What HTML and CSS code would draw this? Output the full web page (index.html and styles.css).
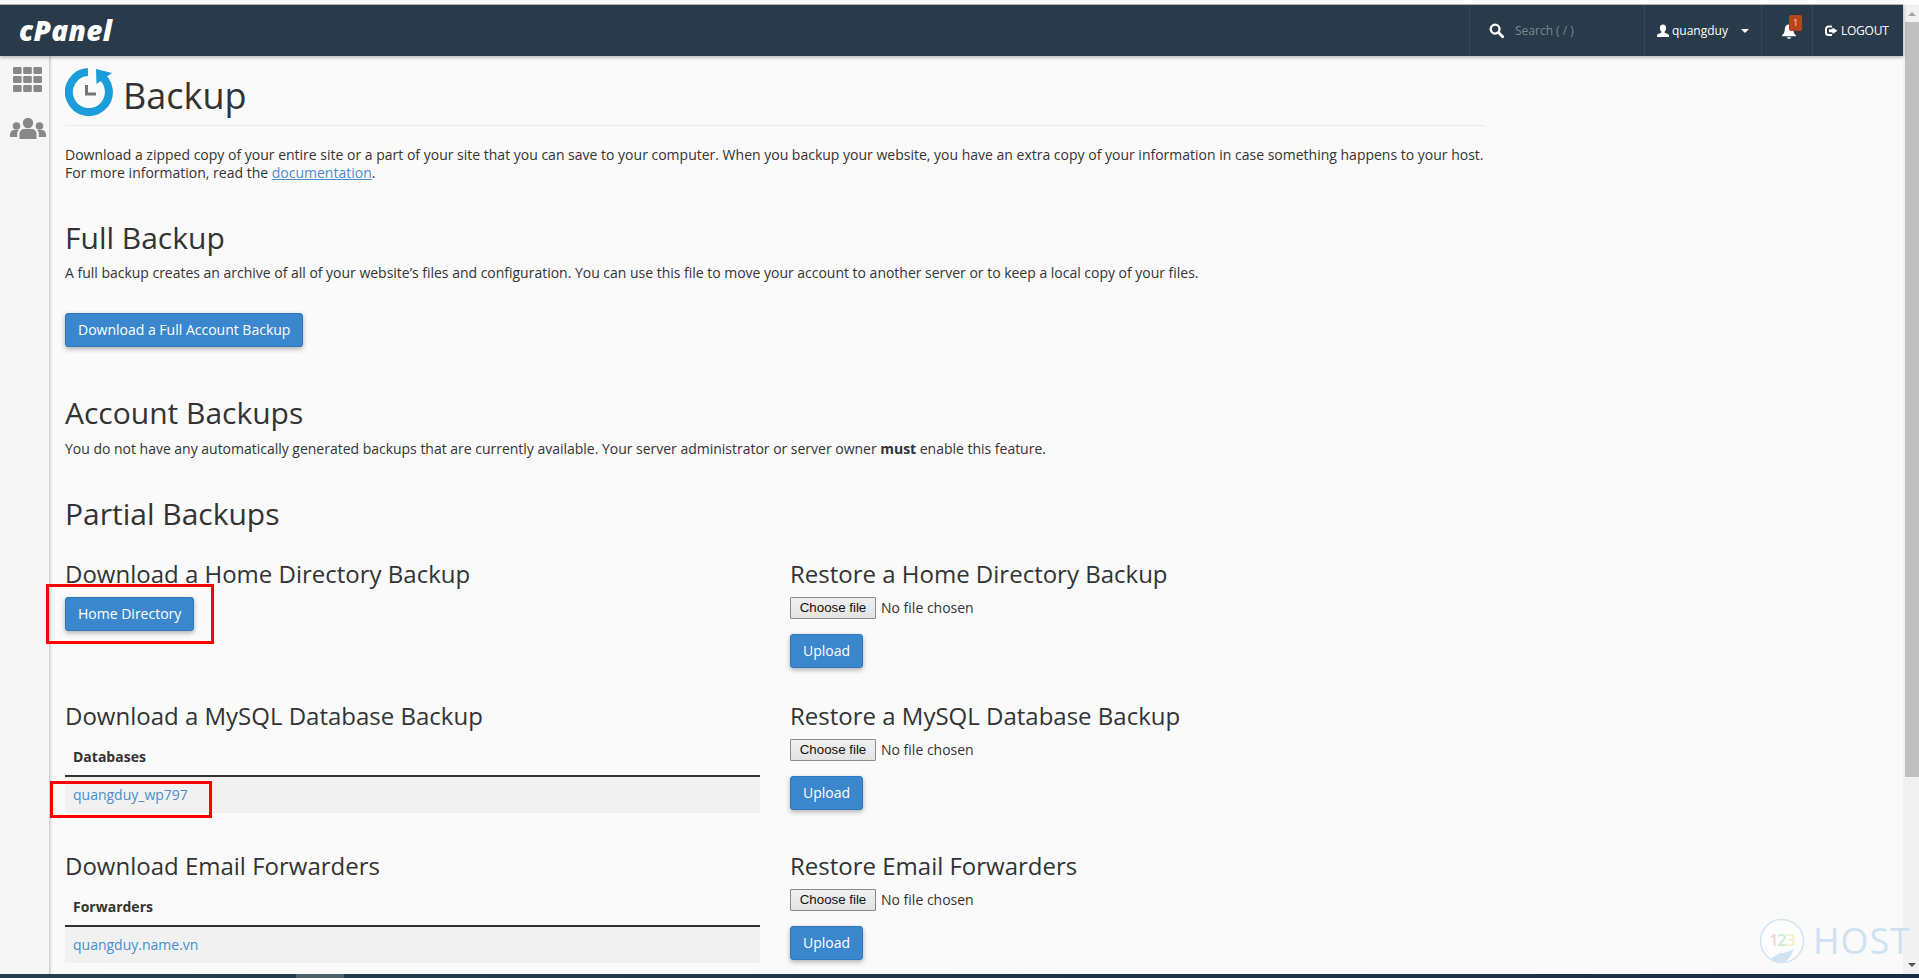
FILE: index.html
```html
<!DOCTYPE html>
<html lang="en">
<head>
<meta charset="utf-8">
<title>Backup - cPanel</title>
<link rel="stylesheet" href="styles.css">
</head>
<body>
<div class="window">
  <header class="topbar">
    <a class="logo">cPanel</a>
    <div class="tools">
      <div class="tool search">
        <svg class="i-search" viewBox="0 0 16 16"><circle cx="6.5" cy="6.5" r="4.7" fill="none" stroke="#fff" stroke-width="2.4"/><path d="M10 10l4.6 4.6" stroke="#fff" stroke-width="3" stroke-linecap="round"/></svg>
        <span class="search-text">Search ( / )</span>
      </div>
      <div class="tool user">
        <svg class="i-user" viewBox="0 0 14 14"><path fill="#fff" d="M7 0.5c2 0 3.2 1.500 3.200 3.600 0 1.500-.7 2.900-1.500 3.500v1.100c1.500.6 4.300 1.300 4.300 2.900v1.400H1v-1.400c0-1.600 2.800-2.300 4.300-2.900V7.600C4.500 7 3.800 5.600 3.800 4.100 3.800 2 5 .5 7 .5z"/></svg>
        <span class="user-name">quangduy</span>
        <span class="caret"></span>
      </div>
      <div class="tool bell">
        <svg class="i-bell" viewBox="0 0 16 16"><path fill="#fff" d="M8 1.500c2.600 0 4.200 2 4.200 4.500 0 3 1 5 2.800 6.500v.8H1v-.8C2.800 11 3.800 9 3.800 6 3.800 3.500 5.400 1.500 8 1.500z"/><path fill="#fff" d="M6 14.300h4c0 1-.9 1.500-2 1.500s-2-.5-2-1.500z"/></svg>
        <span class="badge">1</span>
      </div>
      <div class="tool logout">
        <svg class="i-logout" viewBox="0 0 14 14"><path fill="none" stroke="#fff" stroke-width="2" d="M8 2.500H4.500A2.500 2.500 0 0 0 2 5v3.500A2.500 2.500 0 0 0 4.500 11H8"/><path fill="#fff" d="M8.500 3.500l5 3.300-5 3.300V8.300H5V5.300h3.500z"/></svg>
        <span>LOGOUT</span>
      </div>
    </div>
  </header>
  <div class="body">
    <nav class="sidebar">
      <svg class="i-grid" viewBox="0 0 29 25"><g fill="#888"><rect x="0" y="0" width="8.600" height="7" rx="1.200"/><rect x="10.200" y="0" width="8.600" height="7" rx="1.200"/><rect x="20.400" y="0" width="8.600" height="7" rx="1.200"/><rect x="0" y="9" width="8.600" height="7" rx="1.200"/><rect x="10.200" y="9" width="8.600" height="7" rx="1.200"/><rect x="20.400" y="9" width="8.600" height="7" rx="1.200"/><rect x="0" y="18" width="8.600" height="7" rx="1.200"/><rect x="10.200" y="18" width="8.600" height="7" rx="1.200"/><rect x="20.400" y="18" width="8.600" height="7" rx="1.200"/></g></svg>
      <svg class="i-users" viewBox="0 0 36 22"><g fill="#888"><circle cx="18" cy="6" r="5.200"/><path d="M9.500 22v-5c0-3.500 2.500-5 5-5h7c2.500 0 5 1.500 5 5v5z"/><circle cx="6.500" cy="9" r="3.800"/><path d="M0 20v-2.500c0-3 2-4.500 4-4.500h5c-1.200 1-1.800 2.500-1.800 4.200V20z"/><circle cx="29.500" cy="9" r="3.800"/><path d="M36 20v-2.500c0-3-2-4.500-4-4.500h-5c1.200 1 1.800 2.500 1.800 4.200V20z"/></g></svg>
    </nav>
    <main class="content">
      <div class="page-head">
        <svg class="i-backup" viewBox="0 0 48 48"><path fill="none" stroke="#1b9ddb" stroke-width="8" d="M33 6.200A20 20 0 1 1 23 4.030"/><path fill="#1b9ddb" d="M31 1L47 5 31.500 16z"/><path fill="none" stroke="#747474" stroke-width="3" d="M21.500 17V26H31"/></svg>
        <h1 class="page-title">Backup</h1>
      </div>
      <p class="intro">Download a zipped copy of your entire site or a part of your site that you can save to your computer. When you backup your website, you have an extra copy of your information in case something happens to your host. For more information, read the <a href="#">documentation</a>.</p>

      <section class="full">
        <h2>Full Backup</h2>
        <p>A full backup creates an archive of all of your website’s files and configuration. You can use this file to move your account to another server or to keep a local copy of your files.</p>
        <button class="btn">Download a Full Account Backup</button>
      </section>

      <section class="account">
        <h2>Account Backups</h2>
        <p>You do not have any automatically generated backups that are currently available. Your server administrator or server owner <strong>must</strong> enable this feature.</p>
      </section>

      <section class="partial">
        <h2>Partial Backups</h2>
        <div class="grid">
          <div class="cell">
            <h3>Download a Home Directory Backup</h3>
            <div class="mark-wrap">
              <button class="btn">Home Directory</button>
              <span class="mark mark-home"></span>
            </div>
          </div>
          <div class="cell">
            <h3>Restore a Home Directory Backup</h3>
            <div class="file"><span class="choose">Choose file</span><span class="none">No file chosen</span></div>
            <button class="btn">Upload</button>
          </div>
          <div class="cell">
            <h3>Download a MySQL Database Backup</h3>
            <div class="table">
              <div class="th">Databases</div>
              <div class="td mark-wrap"><a href="#">quangduy_wp797</a><span class="mark mark-db"></span></div>
            </div>
          </div>
          <div class="cell">
            <h3>Restore a MySQL Database Backup</h3>
            <div class="file"><span class="choose">Choose file</span><span class="none">No file chosen</span></div>
            <button class="btn">Upload</button>
          </div>
          <div class="cell">
            <h3>Download Email Forwarders</h3>
            <div class="table">
              <div class="th">Forwarders</div>
              <div class="td"><a href="#">quangduy.name.vn</a></div>
            </div>
          </div>
          <div class="cell">
            <h3>Restore Email Forwarders</h3>
            <div class="file"><span class="choose">Choose file</span><span class="none">No file chosen</span></div>
            <button class="btn">Upload</button>
          </div>
        </div>
      </section>
    </main>
  </div>
  <div class="scrollbar">
    <span class="arrow-up"></span>
    <span class="thumb"></span>
    <span class="arrow-down"></span>
  </div>
  <div class="watermark">
    <svg class="wm-logo" viewBox="0 0 46 46">
      <circle cx="23" cy="23" r="21.500" fill="#fdfdfd" stroke="#d0e3f1" stroke-width="1.500"/>
      <path fill="#d0e3f1" d="M12 40c5-1 6-5 10-5 5 0 8-2 13-4-3 7-7 14-13 14-4 0-7-2-10-5z"/>
      <text class="wm-1" x="10" y="28">1</text><text class="wm-2" x="18" y="28">2</text><text class="wm-3" x="27" y="28">3</text>
    </svg>
    <span class="wm-text">HOST</span>
  </div>
  <div class="taskbar"><span class="task-active"></span></div>
</div>
</body>
</html>
```
FILE: styles.css
```css
* { box-sizing: border-box; }
html, body { margin: 0; height: 100%; }
body {
  font-family: "Open Sans", "Liberation Sans", sans-serif;
  font-size: 14px;
  line-height: 18px;
  color: #333;
  background: #fafafa;
  overflow: hidden;
}
a { color: #4a8dcc; }
.window {
  position: relative;
  width: 1919px;
  height: 978px;
  overflow: hidden;
  display: flex;
  flex-direction: column;
  border-top: 4px solid #fdfdfd;
}
.topbar {
  height: 52px;
  flex: none;
  margin-right: 16px;
  background: #293a4a;
  border-top: 1px solid #b4b4b4;
  box-shadow: 0 1px 4px rgba(0,0,0,.35);
  display: flex;
  justify-content: space-between;
  position: relative;
  z-index: 2;
}
.logo {
  font-family: "Open Sans", sans-serif;
  font-weight: 800;
  font-style: italic;
  font-size: 28px;
  line-height: 50px;
  letter-spacing: .3px;
  color: #fff;
  margin-left: 19px;
}
.tools { display: flex; align-items: stretch; }
.tool {
  display: flex;
  align-items: center;
  color: #fff;
  border-left: 1px solid #34465a;
}
.search { width: 175px; padding-left: 19px; gap: 11px; }
.i-search { width: 15px; height: 15px; }
.search-text { color: #7c8791; font-size: 12px; }
.user { width: 117px; padding-left: 11px; font-size: 12px; }
.i-user { width: 14px; height: 14px; }
.user-name { margin-left: 2px; }
.caret {
  margin-left: 13px;
  border-left: 4px solid transparent;
  border-right: 4px solid transparent;
  border-top: 4px solid #fff;
}
.bell { width: 51px; padding-left: 19px; position: relative; }
.i-bell { width: 16px; height: 16px; }
.badge {
  position: absolute;
  left: 27px;
  top: 10px;
  width: 13px;
  height: 16px;
  border-radius: 2px;
  background: #b8451a;
  color: #f5d9c8;
  font-size: 9px;
  line-height: 15px;
  text-align: center;
}
.logout { width: 91px; padding-left: 11px; font-size: 12px; gap: 3px; letter-spacing: -.25px; }
.i-logout { width: 14px; height: 14px; }

.body { flex: 1; display: flex; min-height: 0; }
.sidebar {
  width: 49px;
  flex: none;
  background: #f6f6f6;
  box-shadow: 1px 0 3px rgba(0,0,0,.25);
  display: flex;
  flex-direction: column;
  align-items: center;
}
.i-grid { width: 29px; height: 25px; margin-top: 11px; margin-left: 6px; }
.i-users { width: 36px; height: 22px; margin-top: 25px; margin-left: 6px; }

.content { width: 1420px; margin-left: 16px; flex: none; }
.page-head {
  display: flex;
  align-items: flex-start;
  height: 70px;
  padding-top: 12px;
  border-bottom: 1px solid #eaeaea;
  gap: 10px;
}
.i-backup { width: 48px; height: 48px; flex: none; }
.page-title { margin: 6px 0 0; font-size: 36px; font-weight: 400; line-height: 44px; }
.intro { margin: 20px 0 0; }
section h2 { margin: 0; font-size: 30px; line-height: 34px; font-weight: 400; }
section p { margin: 9px 0 0; letter-spacing: -.015px; }
.full { margin-top: 39px; }
.full .btn { margin-top: 31px; }
.account { margin-top: 49px; }
.account p { margin-top: 10px; }
.partial { margin-top: 39px; }
.btn {
  display: block;
  font: inherit;
  height: 34px;
  padding: 0 12px;
  color: #fff;
  background: #3a87cd;
  border: 1px solid #2f78bc;
  border-radius: 3px;
  box-shadow: 0 2px 5px rgba(0,0,0,.3);
}
.grid {
  display: grid;
  grid-template-columns: 695px 695px;
  grid-template-rows: 142px 150px 150px;
  column-gap: 30px;
  margin-top: 29px;
  width: 1420px;
}
h3 { margin: 0; font-size: 24px; line-height: 28px; font-weight: 400; }
.mark-wrap { position: relative; margin-top: 9px; width: max-content; }
.mark { position: absolute; border: 3px solid #f00; pointer-events: none; }
.mark-home { left: -19px; top: -13px; width: 168px; height: 60px; }
.table { margin-top: 9px; }
.th { font-weight: 700; height: 38px; padding: 9px 8px; border-bottom: 2px solid #333; }
.table .td { margin: 0; width: auto; background: #f1f1f1; height: 36px; padding: 9px 8px; }
.td a { text-decoration: none; }
.mark-db { left: -15px; top: 4px; width: 162px; height: 37px; }
.file { display: flex; align-items: center; margin-top: 9px; height: 22px; }
.choose {
  width: 86px;
  height: 22px;
  border: 1px solid #8a8a8a;
  border-radius: 1px;
  background: linear-gradient(#f0f0f0, #e3e3e3);
  color: #111;
  font-family: "Liberation Sans", sans-serif;
  font-size: 13.300px;
  line-height: 20px;
  text-align: center;
}
.none { margin-left: 5px; }
.file + .btn { margin-top: 15px; }

.scrollbar {
  position: absolute;
  right: 0;
  top: 1px;
  bottom: 4px;
  width: 16px;
  background: #f1f1f1;
}
.thumb { position: absolute; left: 2px; right: 0; top: 17px; height: 755px; background: #c0c0c0; }
.arrow-up, .arrow-down { position: absolute; left: 5px; border-left: 4px solid transparent; border-right: 4px solid transparent; }
.arrow-up { top: 7px; border-bottom: 4px solid #a3a3a3; }
.arrow-down { bottom: 7px; border-top: 4px solid #505050; }

.watermark { position: absolute; left: 1759px; top: 914px; display: flex; align-items: center; gap: 8px; pointer-events: none; }
.wm-logo { width: 46px; height: 46px; }
.wm-logo text { font-family: "Open Sans", sans-serif; font-size: 17px; font-weight: 600; }
.wm-1 { fill: #f8d7d5; }
.wm-2 { fill: #cfe9d4; }
.wm-3 { fill: #f7f0c0; }
.wm-text { font-size: 36px; line-height: 46px; letter-spacing: 1px; color: #cfe2f1; }

.taskbar { position: absolute; left: 0; right: 0; bottom: 0; height: 4px; background: linear-gradient(90deg, #25404c, #1c2b45); }
.task-active { position: absolute; left: 296px; width: 48px; top: 0; bottom: 0; background: #4f6268; }
```
